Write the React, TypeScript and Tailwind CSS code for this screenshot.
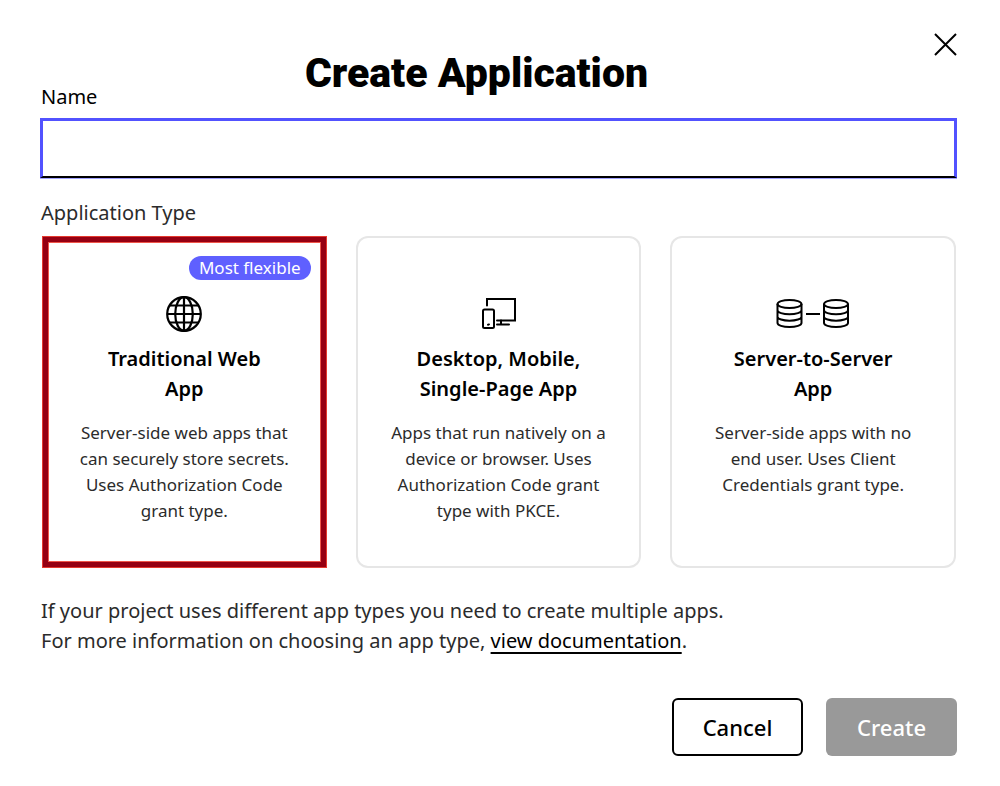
import { useState } from "react";
import type { ReactNode } from "react";
import clsx from "clsx";

type AppType = {
  id: string;
  title: string;
  description: string;
  icon: ReactNode;
  badge?: string;
};

const GlobeIcon = () => (
  <svg width="36" height="36" viewBox="0 0 36 36" fill="none" stroke="currentColor" strokeWidth="2.200">
    <circle cx="18" cy="18" r="16.800" />
    <ellipse cx="18" cy="18" rx="8.800" ry="16.800" />
    <path d="M18 1v34M1 18h34M3.500 9.500h29M3.500 26.500h29" />
  </svg>
);

const DevicesIcon = () => (
  <svg width="36" height="36" viewBox="-1 0 36 36" fill="none" stroke="currentColor" strokeWidth="2" strokeLinecap="round">
    <path d="M6 9.500V3h28v21.500H16" />
    <rect x="2" y="13.500" width="11" height="18.500" rx="1.500" />
    <path d="M20 24.500v4M16 28.500h12" />
    <path d="M7 28.700l1-.3" />
  </svg>
);

const ServersIcon = () => (
  <svg width="74" height="36" viewBox="0 0 74 36" fill="none" stroke="currentColor" strokeWidth="2">
    <ellipse cx="13.500" cy="8" rx="12" ry="4" />
    <path d="M1.500 8v19c0 2.200 5.400 4 12 4s12-1.800 12-4V8M1.500 14.300c0 2.200 5.400 4 12 4s12-1.800 12-4M1.500 20.700c0 2.200 5.400 4 12 4s12-1.800 12-4" />
    <path d="M30 18h14" />
    <ellipse cx="60" cy="8" rx="12" ry="4" />
    <path d="M48 8v19c0 2.200 5.400 4 12 4s12-1.800 12-4V8M48 14.300c0 2.200 5.400 4 12 4s12-1.800 12-4M48 20.700c0 2.200 5.400 4 12 4s12-1.800 12-4" />
  </svg>
);

const appTypes: AppType[] = [
  {
    id: "web",
    title: "Traditional Web App",
    description:
      "Server-side web apps that can securely store secrets. Uses Authorization Code grant type.",
    icon: <GlobeIcon />,
    badge: "Most flexible",
  },
  {
    id: "native",
    title: "Desktop, Mobile, Single-Page App",
    description:
      "Apps that run natively on a device or browser. Uses Authorization Code grant type with PKCE.",
    icon: <DevicesIcon />,
  },
  {
    id: "server",
    title: "Server-to-Server App",
    description:
      "Server-side apps with no end user. Uses Client Credentials grant type.",
    icon: <ServersIcon />,
  },
];

type CardProps = {
  type: AppType;
  selected: boolean;
  onSelect: (id: string) => void;
};

const AppTypeCard = ({ type, selected, onSelect }: CardProps) => (
  <label
    className={clsx(
      "relative flex flex-col items-center px-8 pt-15 pb-11 text-center text-black cursor-pointer",
      selected
        ? "ml-px shadow-[inset_0_0_0_1px_#e5392f,inset_0_0_0_6px_#960012,inset_0_0_0_7px_#f0564a]"
        : "rounded-xl shadow-[inset_0_0_0_2px_#e6e6e6]"
    )}
  >
    <input
      type="radio"
      name="app-type"
      value={type.id}
      checked={selected}
      onChange={() => onSelect(type.id)}
      className="sr-only"
    />
    {type.badge && (
      <span className="absolute right-4 top-5 rounded-full bg-[#5f60ff] px-2.5 text-[17px] leading-6 text-white">
        {type.badge}
      </span>
    )}
    {type.icon}
    <span className="mt-3 px-6 font-semibold">{type.title}</span>
    <span className="mt-4 text-[17px] leading-[26px] text-[#2b2b2b]">
      {type.description}
    </span>
  </label>
);

const App = () => {
  const [name, setName] = useState("");
  const [selected, setSelected] = useState("web");

  return (
    <main className="min-h-screen bg-white pl-10 pr-[43px] py-7 font-['Noto_Sans',sans-serif] text-[20px] leading-[30px] text-[#2b2b2b]">
      <header className="flex items-start pt-1">
        <h1 className="mt-4 flex-1 text-center font-['Roboto',sans-serif] text-[41px] leading-[50px] font-black text-black">
          Create Application
        </h1>
        <button type="button" aria-label="Close" className="w-11 pl-5 text-black">
          <svg width="24" height="24" viewBox="0 0 24 24" fill="none" stroke="currentColor" strokeWidth="2">
            <path d="M2 2l21 21M23 2l-21 21" />
          </svg>
        </button>
      </header>

      <form onSubmit={(e) => e.preventDefault()}>
        <label htmlFor="app-name" className="-mt-4 block pl-px text-black">
          Name
        </label>
        <input
          id="app-name"
          type="text"
          value={name}
          onChange={(e) => setName(e.target.value)}
          className="mt-1.5 block h-15 w-full border-3 border-b-2 border-[#5252ff] border-b-black px-4 shadow-[0_1px_0_#a3a3ff] outline-none"
        />

        <fieldset className="mt-5 px-px">
          <legend>Application Type</legend>
          <div className="mt-2 grid grid-cols-3 gap-[29px]">
            {appTypes.map((type) => (
              <AppTypeCard
                key={type.id}
                type={type}
                selected={selected === type.id}
                onSelect={setSelected}
              />
            ))}
          </div>
        </fieldset>

        <p className="mt-7 pl-px">
          If your project uses different app types you need to create multiple apps.
          <br />
          For more information on choosing an app type,{" "}
          <a href="#docs" className="text-black underline underline-offset-4">
            view documentation
          </a>
          .
        </p>

        <div className="mt-[42px] flex justify-end gap-[23px] text-[22px] font-medium">
          <button
            type="button"
            className="h-[58px] w-[131px] rounded-md border-2 border-black text-black"
          >
            Cancel
          </button>
          <button
            type="submit"
            disabled
            className="h-[58px] w-[131px] rounded-md bg-[#999999] text-white"
          >
            Create
          </button>
        </div>
      </form>
    </main>
  );
};

export default App;
